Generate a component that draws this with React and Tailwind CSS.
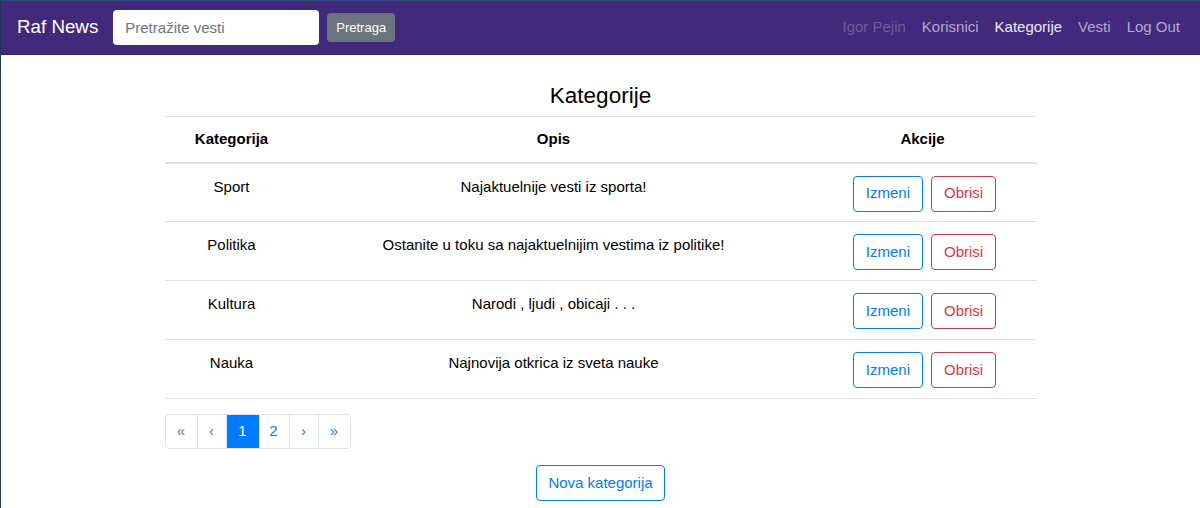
import React from 'react';

const categories = [
    { name: 'Sport', opis: 'Najaktuelnije vesti iz sporta!' },
    { name: 'Politika', opis: 'Ostanite u toku sa najaktuelnijim vestima iz politike!' },
    { name: 'Kultura', opis: 'Narodi , ljudi , obicaji . . .' },
    { name: 'Nauka', opis: 'Najnovija otkrica iz sveta nauke' },
];

const App = () => {
    return (
        <div className="min-h-[508px] bg-white border-l border-[#1d3557] font-['Liberation_Sans',Arial,sans-serif] text-black">
            {/* Navbar */}
            <nav className="h-[55px] bg-[#412a7b] border-t border-[#2c4a78] border-b border-b-[#34206a] flex items-center pl-4 pr-5">
                <span className="text-[18.75px] text-white mr-[15px]">Raf News</span>
                <input
                    type="text"
                    placeholder="Pretražite vesti"
                    className="w-[206px] h-[35px] rounded bg-white px-3 text-[15px] text-gray-700 placeholder:text-[#6c757d] outline-none"
                />
                <button className="ml-2 h-[29px] px-[9px] rounded bg-[#6c757d] text-white text-[13px]">
                    Pretraga
                </button>
                <div className="ml-auto flex items-center gap-4 text-[15px]">
                    <span className="text-white/25">Igor Pejin</span>
                    <span className="text-white/60">Korisnici</span>
                    <span className="text-white/90">Kategorije</span>
                    <span className="text-white/60">Vesti</span>
                    <span className="text-white/60">Log Out</span>
                </div>
            </nav>

            {/* Content */}
            <div className="w-[872px] mx-auto">
                <h1 className="text-[22.5px] leading-[27px] text-center mt-[27px] mb-[7px]">Kategorije</h1>
                <table className="w-full text-[15px] text-center border-collapse">
                    <thead>
                        <tr className="border-t border-[#dee2e6] border-b-2 border-b-[#dee2e6]">
                            <th className="w-[134px] h-[46px] font-bold">Kategorija</th>
                            <th className="w-[510px] font-bold">Opis</th>
                            <th className="font-bold">Akcije</th>
                        </tr>
                    </thead>
                    <tbody>
                        {categories.map((c) => (
                            <tr key={c.name} className="border-b border-[#dee2e6] align-top">
                                <td className="pt-[12px] h-[59px]">{c.name}</td>
                                <td className="pt-[12px]">{c.opis}</td>
                                <td className="pt-3">
                                    <div className="flex justify-center gap-2 pl-1">
                                        <button className="h-9 px-3 rounded border border-[#007bff] text-[#007bff]">Izmeni</button>
                                        <button className="h-9 px-3 rounded border border-[#dc3545] text-[#dc3545]">Obrisi</button>
                                    </div>
                                </td>
                            </tr>
                        ))}
                    </tbody>
                </table>

                {/* Pagination */}
                <div className="mt-[15px] flex">
                    <div className="flex h-[35px] border border-[#dee2e6] rounded text-[15px]">
                        <span className="w-[32px] flex items-center justify-center text-[#6c757d] border-r border-[#dee2e6]">«</span>
                        <span className="w-[29px] flex items-center justify-center text-[#6c757d] border-r border-[#dee2e6]">‹</span>
                        <span className="w-[32px] flex items-center justify-center bg-[#007bff] text-white">1</span>
                        <span className="w-[31px] flex items-center justify-center text-[#007bff] border-r border-[#dee2e6]">2</span>
                        <span className="w-[29px] flex items-center justify-center text-[#007bff] border-r border-[#dee2e6]">›</span>
                        <span className="w-[31px] flex items-center justify-center text-[#007bff]">»</span>
                    </div>
                </div>

                <div className="flex justify-center mt-4">
                    <button className="h-9 px-[11px] rounded border border-[#007bff] text-[#007bff] text-[15px]">
                        Nova kategorija
                    </button>
                </div>
            </div>
        </div>
    );
};

export default App;
